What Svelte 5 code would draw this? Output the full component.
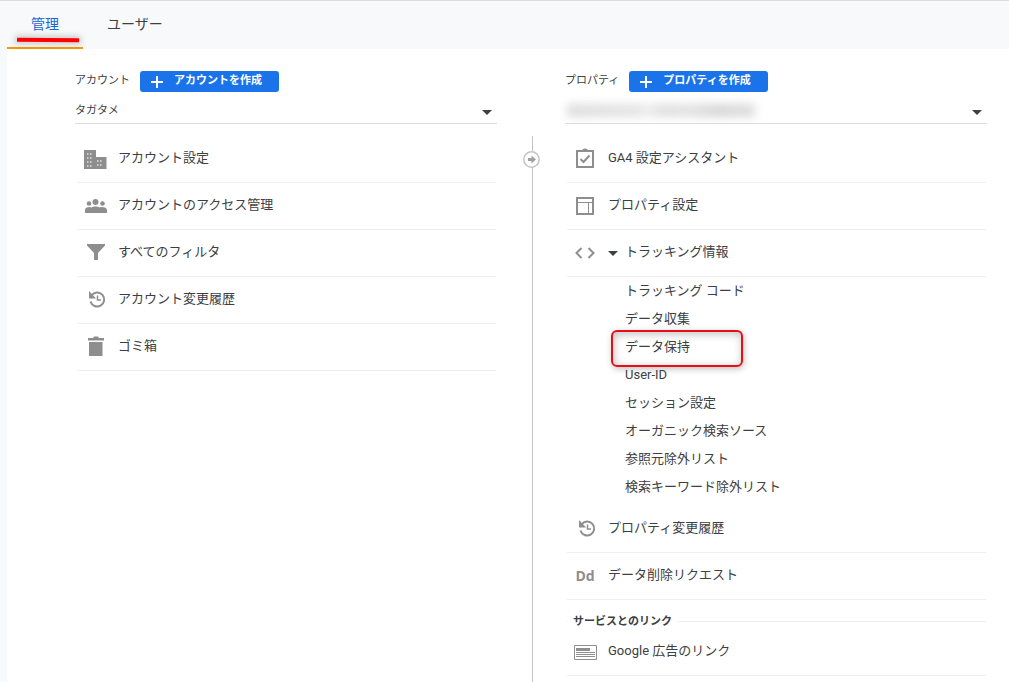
<script>
  const accountItems = [
    { icon: 'building', label: 'アカウント設定' },
    { icon: 'people', label: 'アカウントのアクセス管理' },
    { icon: 'filter', label: 'すべてのフィルタ' },
    { icon: 'history', label: 'アカウント変更履歴' },
    { icon: 'trash', label: 'ゴミ箱' },
  ];

  const propertyItems = [
    { icon: 'check', label: 'GA4 設定アシスタント' },
    { icon: 'layout', label: 'プロパティ設定' },
    {
      icon: 'code',
      label: 'トラッキング情報',
      children: [
        'トラッキング コード',
        'データ収集',
        'データ保持',
        'User-ID',
        'セッション設定',
        'オーガニック検索ソース',
        '参照元除外リスト',
        '検索キーワード除外リスト',
      ],
    },
    { icon: 'history', label: 'プロパティ変更履歴' },
    { icon: 'dd', label: 'データ削除リクエスト' },
  ];

  const linkItems = [{ icon: 'ad', label: 'Google 広告のリンク' }];

  let trackingOpen = $state(true);
  let marked = $state('データ保持');
</script>

{#snippet icon(name)}
  {#if name === 'dd'}
    <span class="icon icon-text" aria-hidden="true">Dd</span>
  {:else}
    <svg class="icon" viewBox="0 0 24 24" aria-hidden="true">
      {#if name === 'building'}
        <path d="M1 3h12v7h10.500v12H1z" />
        <path fill="none" stroke="#e4e4e4" stroke-width="1.500" stroke-dasharray="1.500 1.500" d="M4 7h5M4 11h5M4 15h5M4 19h5M14 14h5M14 18h5" />
      {:else if name === 'people'}
        <circle cx="12.500" cy="8" r="3" />
        <circle cx="6" cy="9.500" r="2.300" />
        <circle cx="19.500" cy="9.500" r="2.300" />
        <path d="M2 19v-3c0-2 2-3 4.500-3 1 0 1.500.2 2 .5 1-.7 2.500-1 4-1s3 .3 4 1c.5-.3 1.500-.5 2.500-.5 2.500 0 5 1 5 3v3z" />
      {:else if name === 'filter'}
        <path d="M4 3h18v1.500L15 12v7h-4v-7L4 4.500z" />
      {:else if name === 'history'}
        <g fill="none" stroke="currentColor" stroke-width="2">
          <path d="M8.500 7.500A7 7 0 1 1 7.500 13.500" />
          <path d="M14.500 7.500V12H18" stroke-width="1.500" />
        </g>
        <path d="M6 3v7.500h7z" />
      {:else if name === 'trash'}
        <path d="M5 3h5l1-1.500h4L16 3h5v2.500H5zM6 7h13.500v14H6z" />
      {:else if name === 'check'}
        <path d="M9 4a3 2.500 0 0 1 6 0z" />
        <path fill="none" stroke="currentColor" stroke-width="2" d="M4 4h16v16H4zM7.500 12l3 3 6-6.500" />
      {:else if name === 'layout'}
        <path fill="none" stroke="currentColor" stroke-width="2" d="M4 4h16v16H4z" />
        <path fill="none" stroke="currentColor" d="M5 8.500h14M15.500 8.500V19" />
      {:else if name === 'code'}
        <path fill="none" stroke="currentColor" stroke-width="2" d="M8.500 7L3.500 12l5 5M15.500 7l5 5-5 5" />
      {:else if name === 'ad'}
        <path fill="none" stroke="currentColor" d="M1.500 5.500h22v14h-22z" />
        <path d="M3 8h14v3H3zM3 12h19v1H3zM3 14h19v1H3zM3 16h19v1H3z" />
      {/if}
    </svg>
  {/if}
{/snippet}

{#snippet heading(id, label, action)}
  <div class="column-heading">
    <label for={id}>{label}</label>
    <button type="button" class="create-button">
      <svg viewBox="0 0 12 12" aria-hidden="true"><path d="M5 0h2v5h5v2H7v5H5V7H0V5h5z" /></svg>
      <span>{action}</span>
    </button>
  </div>
{/snippet}

{#snippet menuItem(item)}
  <li>
    {#if item.children}
      <button type="button" class="menu-row" aria-expanded={trackingOpen} onclick={() => (trackingOpen = !trackingOpen)}>
        {@render icon(item.icon)}
        <span class="caret"></span>
        <span class="menu-label">{item.label}</span>
      </button>
      {#if trackingOpen}
        <ul class="submenu">
          {#each item.children as child (child)}
            <li class:marked={child === marked}>
              <a href="#{child}" onclick={() => (marked = child)}>{child}</a>
            </li>
          {/each}
        </ul>
      {/if}
    {:else}
      <a class="menu-row" href="#{item.label}">
        {@render icon(item.icon)}
        <span class="menu-label">{item.label}</span>
      </a>
    {/if}
  </li>
{/snippet}

<div class="page">
  <nav class="tabs" aria-label="管理">
    <a class="tab is-active" href="#admin" aria-current="page">管理</a>
    <a class="tab" href="#user">ユーザー</a>
  </nav>

  <main class="columns">
    <section>
      {@render heading('account', 'アカウント', 'アカウントを作成')}
      <div class="picker">
        <select id="account">
          <option>タガタメ</option>
        </select>
        <span class="caret"></span>
      </div>
      <ul class="menu">
        {#each accountItems as item (item.label)}
          {@render menuItem(item)}
        {/each}
      </ul>
    </section>

    <div class="divider">
      <svg viewBox="0 0 17 17" aria-hidden="true">
        <circle cx="8.500" cy="8.500" r="7.700" />
        <path d="M5 7h3.500V4.500l4.500 4-4.500 4V10H5z" />
      </svg>
    </div>

    <section>
      {@render heading('property', 'プロパティ', 'プロパティを作成')}
      <div class="picker">
        <select id="property">
          <option></option>
        </select>
        <span class="smudge"></span>
        <span class="caret"></span>
      </div>
      <ul class="menu">
        {#each propertyItems as item (item.label)}
          {@render menuItem(item)}
        {/each}
      </ul>
      <h2 class="group-title">サービスとのリンク</h2>
      <ul class="menu linked">
        {#each linkItems as item (item.label)}
          {@render menuItem(item)}
        {/each}
      </ul>
    </section>
  </main>
</div>

<style>
  :global(body) {
    margin: 0;
    color: #3c4043;
    font-family: Roboto, 'Noto Sans CJK JP', sans-serif;
    font-size: 13px;
  }

  .page {
    display: flex;
    flex-direction: column;
    box-sizing: border-box;
    min-height: 100vh;
    padding-left: 7px;
    border-top: 1px solid #dadce0;
    background: #f8f9fb;
  }

  a {
    color: inherit;
    text-decoration: none;
  }

  button,
  select {
    font: inherit;
    color: inherit;
    cursor: pointer;
  }

  ul {
    margin: 0;
    padding: 0;
    list-style: none;
  }

  .tabs {
    display: flex;
    height: 48px;
  }

  .tab {
    position: relative;
    padding: 0 24px;
    border-bottom: 2px solid transparent;
    font-size: 14px;
    line-height: 46px;
  }

  .tab.is-active {
    border-color: #f99700;
    color: #1967d2;
  }

  .tab.is-active::after {
    content: '';
    position: absolute;
    right: 4px;
    bottom: 5px;
    left: 10px;
    height: 4px;
    background: #f00;
    box-shadow: 0 0 6px 2px rgba(0, 0, 0, 0.2);
    transform: rotate(0.5deg);
  }

  .columns {
    display: grid;
    flex: 1;
    grid-template-columns: 1fr 68px 1fr;
    padding: 0 22px 0 68px;
    background: #fff;
  }

  section {
    min-width: 0;
    padding-top: 22px;
  }

  .column-heading {
    display: flex;
    gap: 10px;
    height: 21px;
    font-size: 11px;
    line-height: 20px;
  }

  .create-button {
    display: flex;
    align-items: center;
    gap: 11px;
    height: 21px;
    padding: 0 17px 0 11px;
    border: 0;
    border-radius: 3px;
    background: #1a73e8;
    color: #fff;
    font-weight: 700;
    line-height: 20px;
  }

  .create-button svg {
    width: 12px;
    height: 12px;
    fill: currentColor;
  }

  .create-button span {
    padding-bottom: 1px;
  }

  .picker {
    display: flex;
    position: relative;
    align-items: center;
    padding: 7px 0 2px;
    border-bottom: 1px solid #dadce0;
  }

  .picker select {
    flex: 1;
    height: 22px;
    padding: 0;
    border: 0;
    background: transparent;
    font-size: 11px;
    appearance: none;
  }

  .caret {
    border: 5px solid transparent;
    border-top-color: #3c4043;
    border-bottom-width: 0;
  }

  .picker .caret {
    position: absolute;
    right: 5px;
    bottom: 8px;
    pointer-events: none;
  }

  .smudge {
    position: absolute;
    top: 12px;
    left: 2px;
    width: 188px;
    height: 13px;
    background: linear-gradient(90deg, #ddd, #e4e4e4 38%, #eee 43%, #dfdfdf 50%, #e2e2e2 65%, #d6d6d6 80%, #ddd);
    filter: blur(5px);
    pointer-events: none;
  }

  .menu {
    margin: 12px 1px 0 2px;
  }

  .menu.linked {
    margin-top: 0;
  }

  .menu-row {
    display: flex;
    align-items: center;
    gap: 11px;
    box-sizing: border-box;
    width: 100%;
    height: 47px;
    padding: 0 6px;
    border: 0;
    border-bottom: 1px solid #f0f0f0;
    background: transparent;
    text-align: left;
  }

  .menu-label {
    padding-bottom: 2px;
    line-height: 20px;
  }

  .menu-row .caret + .menu-label {
    margin-left: -4px;
  }

  .icon {
    flex: none;
    width: 24px;
    height: 24px;
    color: #8e8e8e;
    fill: currentColor;
  }

  .icon-text {
    font-family: 'Open Sans', sans-serif;
    font-size: 14px;
    font-weight: 700;
    line-height: 24px;
    text-align: center;
  }

  .submenu {
    padding: 0 0 5px 58px;
    line-height: 28px;
  }

  .submenu li {
    position: relative;
  }

  .submenu a {
    display: block;
  }

  .submenu .marked::after {
    content: '';
    position: absolute;
    top: -3px;
    bottom: -6px;
    left: -14px;
    box-sizing: border-box;
    width: 132px;
    border: 2px solid #e80e16;
    border-radius: 6px;
    box-shadow: 1px 2px 6px rgba(0, 0, 0, 0.25), inset 1px 2px 8px rgba(0, 0, 0, 0.25);
    pointer-events: none;
  }

  .divider {
    display: flex;
    flex-direction: column;
    align-items: center;
    margin-top: 87px;
    padding-top: 15px;
    background: linear-gradient(#c4c4c4, #c4c4c4) 35px 0 / 1px 100% no-repeat;
  }

  .divider svg {
    width: 17px;
    height: 17px;
    fill: #a0a0a0;
  }

  .divider circle {
    fill: #fff;
    stroke: #c4c4c4;
    stroke-width: 1.5;
  }

  .group-title {
    display: flex;
    align-items: center;
    gap: 5px;
    margin: 0 1px 0 2px;
    padding-top: 14px;
    font-size: 11px;
    font-weight: 700;
    line-height: 15px;
  }

  .group-title::before,
  .group-title::after {
    content: '';
    height: 1px;
    background: #f0f0f0;
  }

  .group-title::before {
    width: 1px;
  }

  .group-title::after {
    flex: 1;
  }
</style>
